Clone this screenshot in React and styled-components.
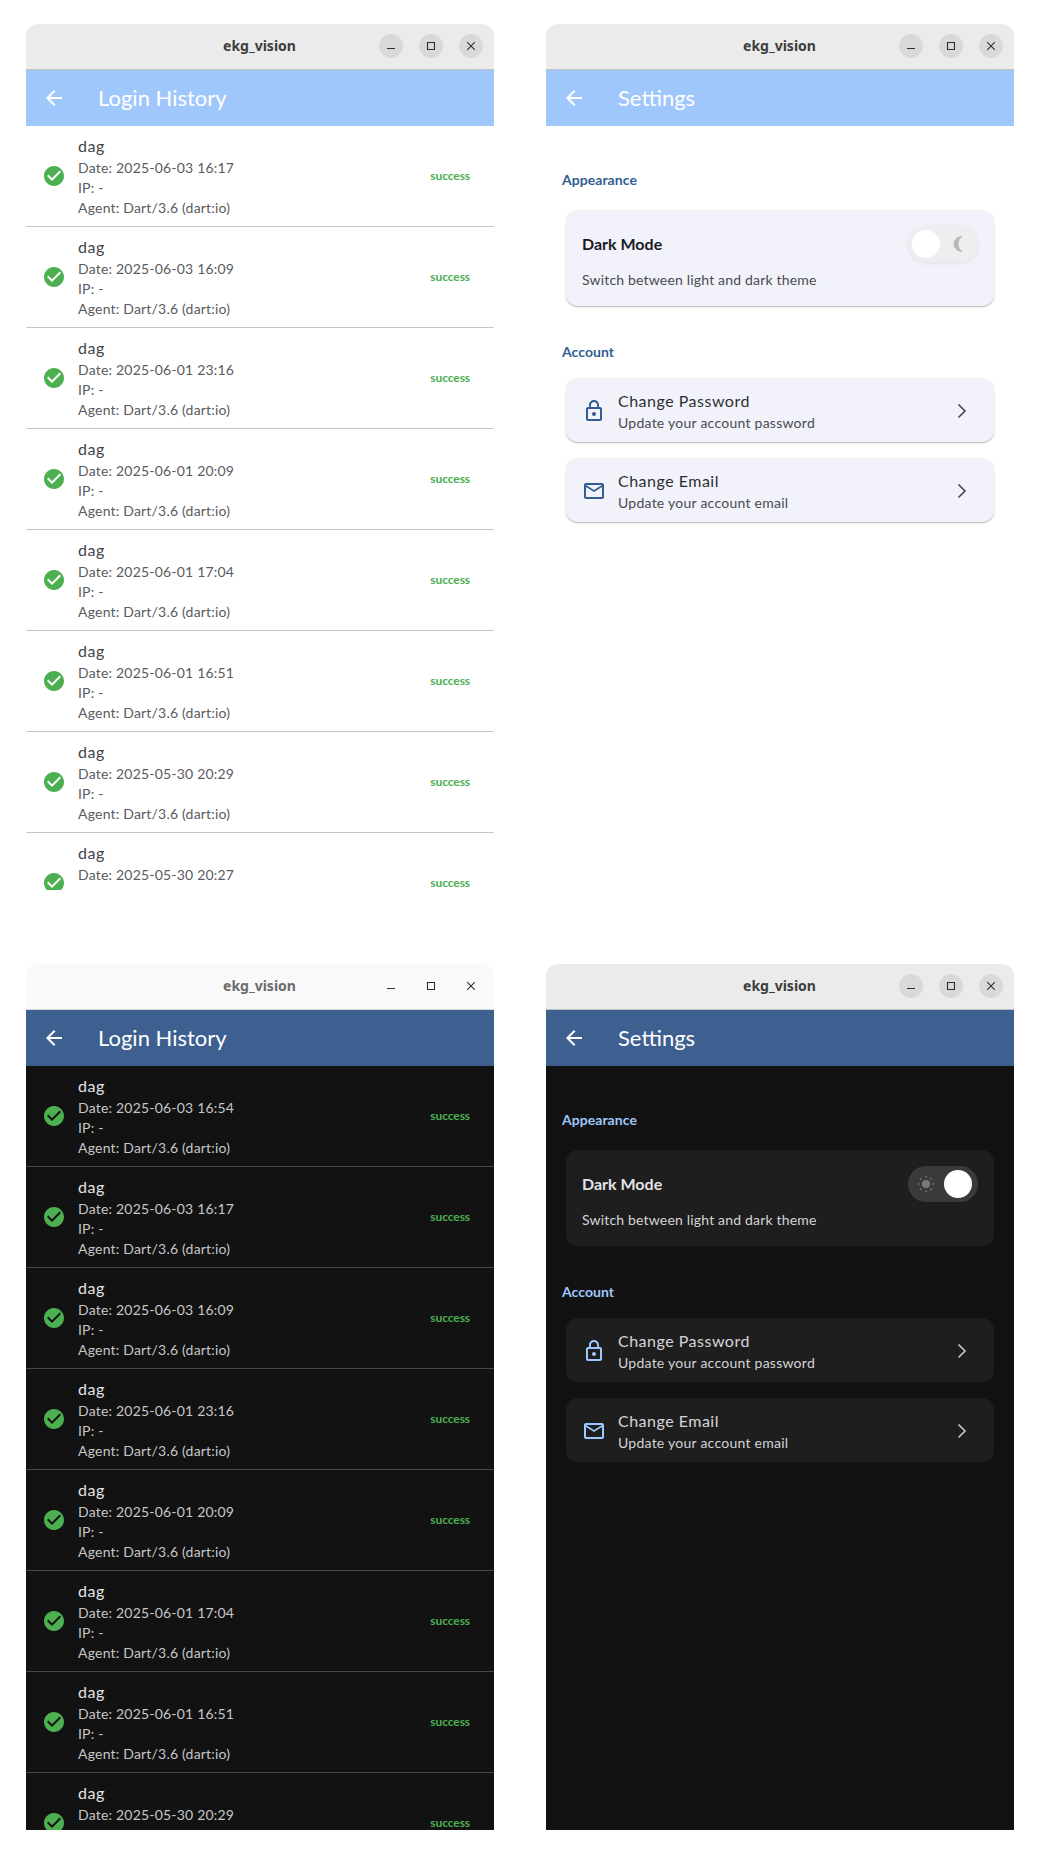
import React from "react";
import styled, { createGlobalStyle, ThemeProvider } from "styled-components";

const light = {
  appBar: "#9fc7fc",
  body: "#ffffff",
  divider: "#c4c6d0",
  name: "#444448",
  meta: "#5a5b60",
  section: "#325d93",
  card: "#f1f2fa",
  cardShadow: "0 1px 1px rgba(0, 0, 0, 0.2), 0 1px 3px rgba(0, 0, 0, 0.1)",
  cardTitle: "#1b1b1f",
  cardText: "#4a4b50",
  accent: "#325d93",
  chevron: "#44474e",
  track: "#eeeef0",
  trackShadow: "0 1px 4px rgba(0, 0, 0, 0.08)",
};

const dark = {
  appBar: "#3d6090",
  body: "#121212",
  divider: "#44464c",
  name: "#e3e3e6",
  meta: "#c6c6ca",
  section: "#9fc7fc",
  card: "#1e1e1e",
  cardShadow: "none",
  cardTitle: "#e3e3e6",
  cardText: "#d4d4d8",
  accent: "#9fc7fc",
  chevron: "#c4c6cf",
  track: "#3a3a3a",
  trackShadow: "none",
};

const GlobalStyle = createGlobalStyle`
  html, body {
    margin: 0;
    padding: 0;
    background: #ffffff;
  }
  body {
    font-family: "Lato", "Liberation Sans", sans-serif;
  }
`;

const Page = styled.div`
  display: grid;
  grid-template-columns: 468px 468px;
  grid-auto-rows: 866px;
  column-gap: 52px;
  row-gap: 74px;
  padding: 24px 26px;
  width: 1040px;
  height: 1860px;
  box-sizing: border-box;
  overflow: hidden;
`;

const Window = styled.section`
  display: flex;
  flex-direction: column;
  border-radius: 12px 12px 0 0;
  overflow: hidden;
`;

const TitleBar = styled.header`
  display: grid;
  grid-template-columns: 1fr auto 1fr;
  align-items: center;
  flex: none;
  height: 44px;
  padding: 0 11px 1px;
  background: ${(p) => (p.$inactive ? "#f9f9f9" : "#ebebeb")};
  border-bottom: 1px solid ${(p) => (p.$inactive ? "#d8d8d8" : "#c2c2c2")};
`;

const TitleText = styled.h2`
  grid-column: 2;
  margin: 0 0 2px -1px;
  font-family: "Noto Sans", sans-serif;
  font-size: 14px;
  font-weight: 700;
  color: ${(p) => (p.$inactive ? "#6b6b6b" : "#3d3d3d")};
`;

const Controls = styled.div`
  grid-column: 3;
  justify-self: end;
  display: flex;
  gap: 16px;
`;

const ControlButton = styled.button`
  display: flex;
  align-items: center;
  justify-content: center;
  width: 24px;
  height: 24px;
  padding: 0;
  border: 0;
  border-radius: 50%;
  color: #2e2e2e;
  background: ${(p) => (p.$inactive ? "transparent" : "#d9d9d9")};
`;

const AppBar = styled.div`
  display: flex;
  align-items: center;
  gap: 32px;
  flex: none;
  height: 56px;
  padding: 0 16px;
  color: #ffffff;
  background: ${(p) => p.theme.appBar};
`;

const AppTitle = styled.h1`
  margin: 0 0 2px;
  font-size: 22px;
  font-weight: 400;
`;

const Icon = styled.svg`
  display: block;
  flex: none;
  width: ${(p) => p.$size || 24}px;
  height: ${(p) => p.$size || 24}px;
  fill: currentColor;
`;

const List = styled.div`
  flex: 1;
  min-height: 0;
  overflow: hidden;
  background: ${(p) => p.theme.body};
`;

const Row = styled.div`
  display: flex;
  align-items: center;
  gap: 12px;
  padding: 8px 24px 8px 16px;
  border-bottom: 1px solid ${(p) => p.theme.divider};
`;

const StatusIcon = styled.span`
  color: #4caf50;
`;

const RowBody = styled.div`
  flex: 1;
  min-width: 0;
`;

const RowName = styled.div`
  font-size: 16px;
  line-height: 24px;
  letter-spacing: 0.5px;
  color: ${(p) => p.theme.name};
`;

const RowMeta = styled.div`
  font-size: 14px;
  line-height: 20px;
  letter-spacing: 0.2px;
  color: ${(p) => p.theme.meta};
`;

const Status = styled.span`
  margin-bottom: 2px;
  font-size: 12px;
  font-weight: 700;
  letter-spacing: -0.1px;
  color: #4caf50;
`;

const SettingsBody = styled.div`
  flex: 1;
  padding: 44px 20px 0;
  background: ${(p) => p.theme.body};
`;

const SectionLabel = styled.h3`
  margin: ${(p) => (p.$first ? "0 0 20px -4px" : "36px 0 16px -4px")};
  font-size: 14px;
  line-height: 20px;
  font-weight: 700;
  letter-spacing: 0.05px;
  color: ${(p) => p.theme.section};
`;

const Card = styled.div`
  border-radius: 12px;
  background: ${(p) => p.theme.card};
  box-shadow: ${(p) => p.theme.cardShadow};
`;

const ToggleCard = styled(Card)`
  padding: 16px 16px 16px;
`;

const ToggleRow = styled.div`
  display: flex;
  align-items: center;
  justify-content: space-between;
  height: 36px;
  margin-bottom: 8px;
`;

const ToggleTitle = styled.div`
  margin-bottom: 2px;
  font-size: 16px;
  font-weight: 700;
  color: ${(p) => p.theme.cardTitle};
`;

const ToggleHint = styled.div`
  font-size: 14px;
  line-height: 20px;
  letter-spacing: 0.18px;
  color: ${(p) => p.theme.cardText};
`;

const Track = styled.div`
  display: flex;
  align-items: center;
  justify-content: space-between;
  flex-direction: ${(p) => (p.$on ? "row" : "row-reverse")};
  width: 70px;
  height: 36px;
  padding: ${(p) => (p.$on ? "0 6px 0 10px" : "0 4px")};
  box-sizing: border-box;
  border-radius: 18px;
  background: ${(p) => p.theme.track};
  box-shadow: ${(p) => p.theme.trackShadow};
`;

const TrackGlyph = styled.span`
  color: ${(p) => (p.$on ? "#7a7a7a" : "#b8b8b8")};
  margin-right: ${(p) => (p.$on ? 0 : 7)}px;
`;

const Thumb = styled.span`
  width: 28px;
  height: 28px;
  border-radius: 50%;
  background: #ffffff;
`;

const Tiles = styled.div`
  display: flex;
  flex-direction: column;
  gap: 16px;
`;

const Tile = styled(Card)`
  display: flex;
  align-items: center;
  gap: 12px;
  height: 64px;
  padding: 1px 20px 0 16px;
  box-sizing: border-box;
`;

const TileIcon = styled.span`
  color: ${(p) => p.theme.accent};
`;

const TileBody = styled.div`
  flex: 1;
`;

const TileTitle = styled.div`
  font-size: 16px;
  line-height: 24px;
  letter-spacing: 0.5px;
  color: ${(p) => p.theme.cardTitle};
  opacity: 0.92;
`;

const TileHint = styled.div`
  font-size: 14px;
  line-height: 20px;
  letter-spacing: 0.25px;
  color: ${(p) => p.theme.cardText};
`;

const Chevron = styled.svg`
  display: block;
  flex: none;
  width: 24px;
  height: 24px;
  fill: none;
  stroke: ${(p) => p.theme.chevron};
  stroke-width: 1.6;
`;

const ICONS = {
  back: "M20 11H7.83l5.59-5.59L12 4l-8 8 8 8 1.41-1.41L7.83 13H20v-2z",
  check:
    "M12 2C6.48 2 2 6.48 2 12s4.48 10 10 10 10-4.48 10-10S17.52 2 12 2zm-2 15l-5-5 1.41-1.41L10 14.17l7.59-7.59L19 8l-9 9z",
  lock: "M12 17c1.1 0 2-.9 2-2s-.9-2-2-2-2 .9-2 2 .9 2 2 2zm6-9h-1V6c0-2.76-2.24-5-5-5S7 3.24 7 6v2H6c-1.1 0-2 .9-2 2v10c0 1.1.9 2 2 2h12c1.1 0 2-.9 2-2V10c0-1.1-.9-2-2-2zM8.9 6c0-1.71 1.39-3.1 3.1-3.1s3.1 1.39 3.1 3.1v2H8.9V6zM18 20H6V10h12v10z",
  mail: "M22 6c0-1.1-.9-2-2-2H4c-1.1 0-2 .9-2 2v12c0 1.1.9 2 2 2h16c1.1 0 2-.9 2-2V6zm-2 0l-8 5-8-5h16zm0 12H4V8l8 5 8-5v10z",
};

const MaterialIcon = ({ name, size }) => (
  <Icon viewBox="0 0 24 24" $size={size}>
    <path d={ICONS[name]} />
  </Icon>
);

const WindowGlyph = ({ d }) => (
  <svg width="12" height="12" viewBox="0 0 12 12" fill="none" stroke="currentColor" strokeWidth="1.1">
    <path d={d} />
  </svg>
);

const Moon = () => (
  <Icon viewBox="0 0 16 16" $size={16}>
    <path d="M12 .5A7.7 7.7 0 1 0 12 15.5A8.5 8.5 0 0 1 12 .5z" />
  </Icon>
);

const Sun = () => (
  <Icon viewBox="0 0 16 16" $size={16}>
    <circle cx="8" cy="8" r="4" />
    {[[8, 0.6], [8, 15.4], [0.6, 8], [15.4, 8], [2.8, 2.8], [13.2, 2.8], [2.8, 13.2], [13.2, 13.2]].map(([x, y]) => (
      <circle key={`${x}-${y}`} cx={x} cy={y} r="0.9" />
    ))}
  </Icon>
);

const ChevronRight = () => (
  <Chevron viewBox="0 0 24 24">
    <path d="M8.5 5.5L15 12l-6.5 6.5" />
  </Chevron>
);

const Chrome = ({ inactive }) => (
  <TitleBar $inactive={inactive}>
    <TitleText $inactive={inactive}>ekg_vision</TitleText>
    <Controls>
      <ControlButton $inactive={inactive}><WindowGlyph d="M2 8.5h8" /></ControlButton>
      <ControlButton $inactive={inactive}><WindowGlyph d="M2.5 2.5h7v7h-7z" /></ControlButton>
      <ControlButton $inactive={inactive}><WindowGlyph d="M2.2 2.2l7.6 7.6M9.8 2.2l-7.6 7.6" /></ControlButton>
    </Controls>
  </TitleBar>
);

const Header = ({ title }) => (
  <AppBar>
    <MaterialIcon name="back" />
    <AppTitle>{title}</AppTitle>
  </AppBar>
);

const lightDates = [
  "2025-06-03 16:17",
  "2025-06-03 16:09",
  "2025-06-01 23:16",
  "2025-06-01 20:09",
  "2025-06-01 17:04",
  "2025-06-01 16:51",
  "2025-05-30 20:29",
  "2025-05-30 20:27",
];

const darkDates = ["2025-06-03 16:54", ...lightDates.slice(0, 7)];

const LoginHistory = ({ dates, inactive }) => (
  <Window>
    <Chrome inactive={inactive} />
    <Header title="Login History" />
    <List>
      {dates.map((date) => (
        <Row key={date}>
          <StatusIcon><MaterialIcon name="check" /></StatusIcon>
          <RowBody>
            <RowName>dag</RowName>
            <RowMeta>Date: {date}</RowMeta>
            <RowMeta>IP: -</RowMeta>
            <RowMeta>Agent: Dart/3.6 (dart:io)</RowMeta>
          </RowBody>
          <Status>success</Status>
        </Row>
      ))}
    </List>
  </Window>
);

const Settings = ({ on }) => (
  <Window>
    <Chrome />
    <Header title="Settings" />
    <SettingsBody>
      <SectionLabel $first>Appearance</SectionLabel>
      <ToggleCard>
        <ToggleRow>
          <ToggleTitle>Dark Mode</ToggleTitle>
          <Track $on={on}>
            <TrackGlyph $on={on}>{on ? <Sun /> : <Moon />}</TrackGlyph>
            <Thumb />
          </Track>
        </ToggleRow>
        <ToggleHint>Switch between light and dark theme</ToggleHint>
      </ToggleCard>
      <SectionLabel>Account</SectionLabel>
      <Tiles>
        <Tile>
          <TileIcon><MaterialIcon name="lock" /></TileIcon>
          <TileBody>
            <TileTitle>Change Password</TileTitle>
            <TileHint>Update your account password</TileHint>
          </TileBody>
          <ChevronRight />
        </Tile>
        <Tile>
          <TileIcon><MaterialIcon name="mail" /></TileIcon>
          <TileBody>
            <TileTitle>Change Email</TileTitle>
            <TileHint>Update your account email</TileHint>
          </TileBody>
          <ChevronRight />
        </Tile>
      </Tiles>
    </SettingsBody>
  </Window>
);

const App = () => (
  <>
    <GlobalStyle />
    <Page>
      <ThemeProvider theme={light}>
        <LoginHistory dates={lightDates} />
        <Settings />
      </ThemeProvider>
      <ThemeProvider theme={dark}>
        <LoginHistory dates={darkDates} inactive />
        <Settings on />
      </ThemeProvider>
    </Page>
  </>
);

export default App;
